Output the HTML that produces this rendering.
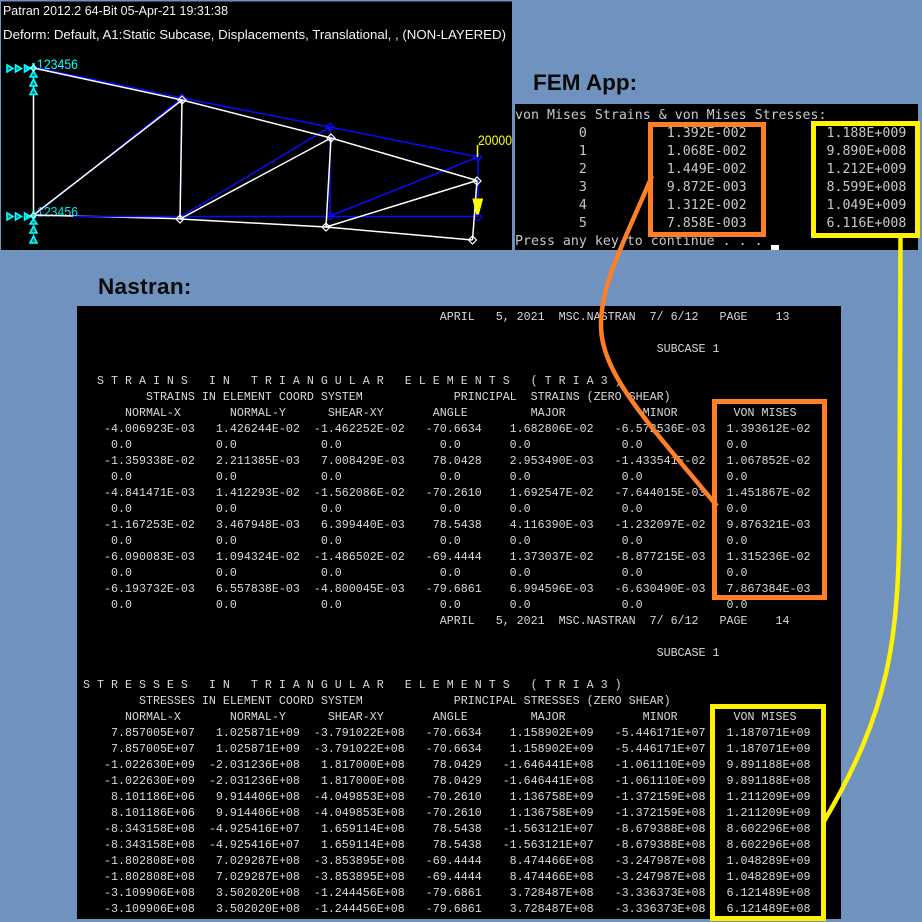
<!DOCTYPE html>
<html><head><meta charset="utf-8">
<style>
html,body{margin:0;padding:0;background:#7092BE;width:922px;height:922px;overflow:hidden;position:relative}
.p{position:absolute;background:#000}
pre{position:absolute;margin:0;font-family:"Liberation Mono",monospace;font-kerning:none}
.t{position:absolute;font-family:"Liberation Sans",sans-serif;font-weight:bold;color:#0a0a0a;white-space:nowrap;font-size:22.5px;line-height:26px}
.b{position:absolute;box-sizing:border-box;border-style:solid;border-width:5px}
svg{position:absolute;left:0;top:0}
</style></head>
<body>
<svg width="922" height="250" style="z-index:1">
<rect x="1" y="1.5" width="511" height="248.5" fill="#000"/>
<g font-family="'Liberation Sans',sans-serif" fill="#f4f4f4" font-size="13">
<text x="3" y="15" textLength="225" lengthAdjust="spacingAndGlyphs">Patran 2012.2 64-Bit 05-Apr-21 19:31:38</text>
<text x="3" y="39" textLength="503" lengthAdjust="spacingAndGlyphs">Deform: Default, A1:Static Subcase, Displacements, Translational, , (NON-LAYERED)</text>
<text x="37" y="69" font-size="14" fill="#00ffff" textLength="41" lengthAdjust="spacingAndGlyphs">123456</text>
<text x="37" y="216.5" font-size="14" fill="#00e8e8" textLength="41" lengthAdjust="spacingAndGlyphs">123456</text>
<text x="478" y="145" font-size="14" fill="#ffff00" textLength="34" lengthAdjust="spacingAndGlyphs">20000</text>
</g>
<path d="M33.5 215L180 218.7" stroke="#fff" stroke-width="1.5" fill="none"/>
<g stroke="#0a0aff" stroke-width="1.5" fill="none">
<path d="M33.5 67L182 98L330 127L478 157"/>
<path d="M73 216.5H478"/>
<path d="M182 98L180 217M330 127L330 216M478 157V217M33.5 216L182 98M180 217L330 127M330 216L478 157"/>
<path d="M182 94l4 4l-4 4l-4-4zM330 123l4 4l-4 4l-4-4zM478 153l4 4l-4 4l-4-4zM330 212l4 4l-4 4l-4-4zM478 213l4 4l-4 4l-4-4z" stroke-width="1.2"/>
</g>
<g stroke="#ffffff" stroke-width="1.5" fill="none">
<path d="M33.5 68L182 100L331 138L477 180.5"/>
<path d="M33.5 68V215"/>
<path d="M180 219L326 227L472.5 240"/>
<path d="M182 100L180 219M331 138L326 227M477 180.5L472.5 240M33.5 215L182 100M180 219L331 138M326 227L477 180.5"/>
<path d="M182 96l4 4l-4 4l-4-4zM331 134l4 4l-4 4l-4-4zM477 177l4 4l-4 4l-4-4zM180 215l4 4l-4 4l-4-4zM326 223l4 4l-4 4l-4-4zM472.5 236l4 4l-4 4l-4-4z" stroke-width="1.2"/>
</g>
<g stroke="#00ffff" stroke-width="1.6" fill="#007a7a">
<path d="M7 65l6 3.500l-6 3.500zM15.500 65l6 3.500l-6 3.500zM24.500 65l6 3.500l-6 3.500z"/>
<path d="M7 213l6 3.500l-6 3.500zM15.500 213l6 3.500l-6 3.500zM24.500 213l6 3.500l-6 3.500z"/>
<path d="M33.500 71l3.500 6h-7zM33.500 79l3.500 7h-7zM33.500 88l3.500 6.500h-7z"/>
<path d="M33.500 219l3.500 5h-7zM33.500 226l3.500 7h-7zM33.500 236l3.500 7h-7z"/>
</g>
<path d="M26 68H36M26 216.500H36M33.500 63V73M33.500 211V221" stroke="#00ffff" stroke-width="2.500"/>
<path d="M33.500 65l3 3l-3 3l-3-3zM33.500 212.500l3 3l-3 3l-3-3z" stroke="#fff" fill="none"/>
<path d="M477.500 145V157" stroke="#ffff00" stroke-width="1.500"/>
<path d="M473 199h9.500l-4 15h-2z" fill="#ffff00" stroke="#ffff00"/>
</svg>

<div class="t" style="left:533px;top:70px;z-index:2">FEM App:</div>
<div class="t" style="left:98px;top:274px;z-index:2;letter-spacing:.3px">Nastran:</div>

<div class="p" style="left:515px;top:104px;width:403px;height:146px"></div>
<pre style="left:515px;top:107px;font-family:'DejaVu Sans Mono',monospace;font-size:13.28px;line-height:18px;color:#c8c8c8;z-index:2">von Mises Strains &amp; von Mises Stresses:
        0          1.392E-002          1.188E+009
        1          1.068E-002          9.890E+008
        2          1.449E-002          1.212E+009
        3          9.872E-003          8.599E+008
        4          1.312E-002          1.049E+009
        5          7.858E-003          6.116E+008
Press any key to continue . . .</pre>
<div style="position:absolute;left:771px;top:245px;width:8px;height:5px;background:#fff;z-index:2"></div>

<div class="p" style="left:77px;top:306px;width:764px;height:612.500px"></div>
<pre style="left:76px;top:309px;font-size:11.667px;line-height:16px;color:#d8d8d8;z-index:2">                                                    APRIL   5, 2021  MSC.NASTRAN  7/ 6/12   PAGE    13

                                                                                   SUBCASE 1

   S T R A I N S   I N   T R I A N G U L A R   E L E M E N T S   ( T R I A 3 )
          STRAINS IN ELEMENT COORD SYSTEM             PRINCIPAL  STRAINS (ZERO SHEAR)
       NORMAL-X       NORMAL-Y      SHEAR-XY       ANGLE         MAJOR           MINOR        VON MISES
    -4.006923E-03   1.426244E-02  -1.462252E-02   -70.6634    1.682806E-02   -6.572536E-03   1.393612E-02
     0.0            0.0            0.0              0.0       0.0             0.0            0.0
    -1.359338E-02   2.211385E-03   7.008429E-03    78.0428    2.953490E-03   -1.433541E-02   1.067852E-02
     0.0            0.0            0.0              0.0       0.0             0.0            0.0
    -4.841471E-03   1.412293E-02  -1.562086E-02   -70.2610    1.692547E-02   -7.644015E-03   1.451867E-02
     0.0            0.0            0.0              0.0       0.0             0.0            0.0
    -1.167253E-02   3.467948E-03   6.399440E-03    78.5438    4.116390E-03   -1.232097E-02   9.876321E-03
     0.0            0.0            0.0              0.0       0.0             0.0            0.0
    -6.090083E-03   1.094324E-02  -1.486502E-02   -69.4444    1.373037E-02   -8.877215E-03   1.315236E-02
     0.0            0.0            0.0              0.0       0.0             0.0            0.0
    -6.193732E-03   6.557838E-03  -4.800045E-03   -79.6861    6.994596E-03   -6.630490E-03   7.867384E-03
     0.0            0.0            0.0              0.0       0.0             0.0            0.0
                                                    APRIL   5, 2021  MSC.NASTRAN  7/ 6/12   PAGE    14

                                                                                   SUBCASE 1

 S T R E S S E S   I N   T R I A N G U L A R   E L E M E N T S   ( T R I A 3 )
         STRESSES IN ELEMENT COORD SYSTEM             PRINCIPAL STRESSES (ZERO SHEAR)
       NORMAL-X       NORMAL-Y      SHEAR-XY       ANGLE         MAJOR           MINOR        VON MISES
     7.857005E+07   1.025871E+09  -3.791022E+08   -70.6634    1.158902E+09   -5.446171E+07   1.187071E+09
     7.857005E+07   1.025871E+09  -3.791022E+08   -70.6634    1.158902E+09   -5.446171E+07   1.187071E+09
    -1.022630E+09  -2.031236E+08   1.817000E+08    78.0429   -1.646441E+08   -1.061110E+09   9.891188E+08
    -1.022630E+09  -2.031236E+08   1.817000E+08    78.0429   -1.646441E+08   -1.061110E+09   9.891188E+08
     8.101186E+06   9.914406E+08  -4.049853E+08   -70.2610    1.136758E+09   -1.372159E+08   1.211209E+09
     8.101186E+06   9.914406E+08  -4.049853E+08   -70.2610    1.136758E+09   -1.372159E+08   1.211209E+09
    -8.343158E+08  -4.925416E+07   1.659114E+08    78.5438   -1.563121E+07   -8.679388E+08   8.602296E+08
    -8.343158E+08  -4.925416E+07   1.659114E+08    78.5438   -1.563121E+07   -8.679388E+08   8.602296E+08
    -1.802808E+08   7.029287E+08  -3.853895E+08   -69.4444    8.474466E+08   -3.247987E+08   1.048289E+09
    -1.802808E+08   7.029287E+08  -3.853895E+08   -69.4444    8.474466E+08   -3.247987E+08   1.048289E+09
    -3.109906E+08   3.502020E+08  -1.244456E+08   -79.6861    3.728487E+08   -3.336373E+08   6.121489E+08
    -3.109906E+08   3.502020E+08  -1.244456E+08   -79.6861    3.728487E+08   -3.336373E+08   6.121489E+08</pre>

<div class="b" style="left:648px;top:122px;width:118px;height:115px;border-color:#FF7F27;z-index:3"></div>
<div class="b" style="left:811px;top:121px;width:109px;height:117px;border-color:#FFF200;z-index:3"></div>
<div class="b" style="left:712px;top:399px;width:115px;height:201px;border-color:#FF7F27;z-index:3"></div>
<div class="b" style="left:710px;top:704px;width:116px;height:217px;border-color:#FFF200;z-index:3"></div>

<svg width="922" height="922" style="z-index:4" fill="none">
<path d="M652 176C625 240 600 285 601 327C602 375 650 425 717 506" stroke="#FF7F27" stroke-width="4.500"/>
<path d="M900.500 237L899.500 520C898 640 890 710 823 823" stroke="#FFF200" stroke-width="4.500"/>
</svg>
</body></html>
